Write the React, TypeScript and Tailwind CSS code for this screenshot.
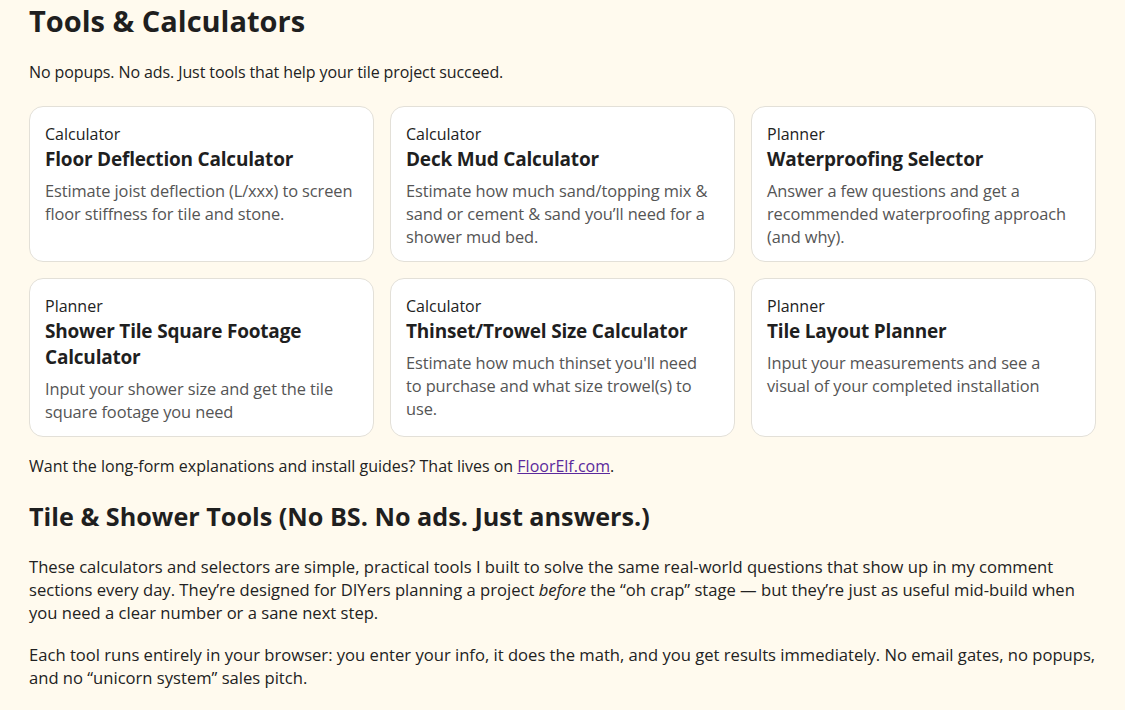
import React from "react";

type Tool = { kind: string; title: string; desc: React.ReactNode };

const tools: Tool[] = [
  { kind: "Calculator", title: "Floor Deflection Calculator", desc: "Estimate joist deflection (L/xxx) to screen floor stiffness for tile and stone." },
  { kind: "Calculator", title: "Deck Mud Calculator", desc: "Estimate how much sand/topping mix & sand or cement & sand you\u2019ll need for a shower mud bed." },
  { kind: "Planner", title: "Waterproofing Selector", desc: "Answer a few questions and get a recommended waterproofing approach (and why)." },
  { kind: "Planner", title: "Shower Tile Square Footage Calculator", desc: "Input your shower size and get the tile square footage you need" },
  {
    kind: "Calculator",
    title: "Thinset/Trowel Size Calculator",
    desc: (
      <>
        Estimate how much thinset you'll need
        <br />
        to purchase and what size trowel(s) to use.
      </>
    ),
  },
  { kind: "Planner", title: "Tile Layout Planner", desc: "Input your measurements and see a visual of your completed installation" },
];

export default function App() {
  return (
    <div
      className="min-h-[710px] w-full bg-[#fffaee] text-[#222] px-[29px]"
      style={{ fontFamily: '"Open Sans", "Noto Sans", sans-serif' }}
    >
      <h1 className="pt-[1px] text-[29px] leading-[40px] font-bold text-[#1f1f1f]">Tools &amp; Calculators</h1>
      <p className="mt-[20px] text-[16px] leading-[23px] tracking-[-0.1px]">No popups. No ads. Just tools that help your tile project succeed.</p>
      <div className="mt-[22px] grid grid-cols-3 gap-[16px]">
        {tools.map((t) => (
          <div key={t.title} className="rounded-[14px] border border-[#e3e0d8] bg-white px-[15px] pt-[16px] pb-[13px]">
            <div className="text-[16px] leading-[23px] text-[#222]">{t.kind}</div>
            <div className="text-[19px] leading-[26px] font-bold tracking-[-0.2px] text-[#1f1f1f]">{t.title}</div>
            <div className="mt-[7px] text-[16.4px] leading-[23px] tracking-[-0.1px] text-[#555]">{t.desc}</div>
          </div>
        ))}
      </div>
      <p className="mt-[18px] text-[16px] leading-[23px]">
        Want the long-form explanations and install guides? That lives on{" "}
        <a href="#" className="text-[#5b2a9c] underline">FloorElf.com</a>.
      </p>
      <h2 className="mt-[22px] text-[25.2px] leading-[32px] font-bold text-[#1f1f1f]">Tile &amp; Shower Tools (No BS. No ads. Just answers.)</h2>
      <p className="mt-[23px] text-[16.6px] leading-[23px]">
        These calculators and selectors are simple, practical tools I built to solve the same real-world questions that show up in my comment sections every day. They&rsquo;re designed for DIYers planning a project <em>before</em> the &ldquo;oh crap&rdquo; stage &mdash; but they&rsquo;re just as useful mid-build when you need a clear number or a sane next step.
      </p>
      <p className="mt-[19px] text-[16.6px] leading-[23px]">
        Each tool runs entirely in your browser: you enter your info, it does the math, and you get results immediately. No email gates, no popups, and no &ldquo;unicorn system&rdquo; sales pitch.
      </p>
    </div>
  );
}
